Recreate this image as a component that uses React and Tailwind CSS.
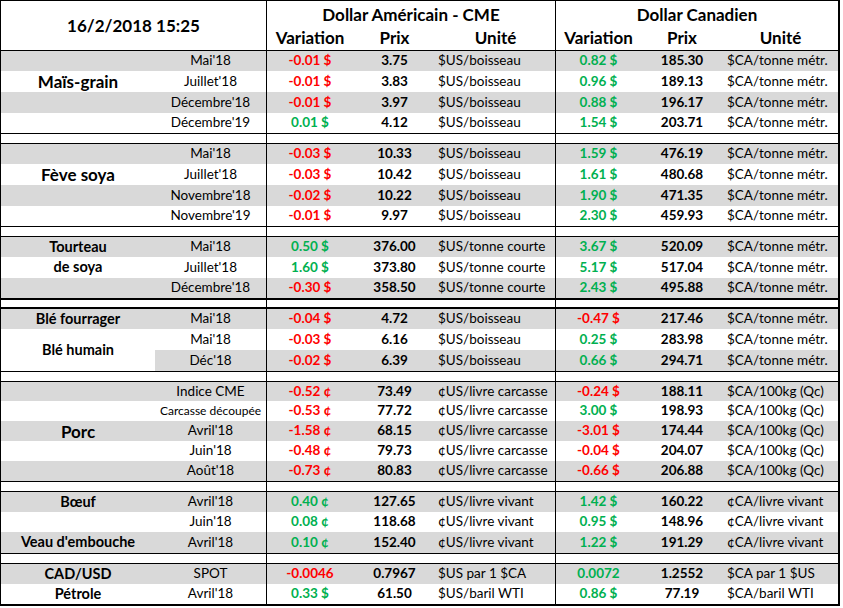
const cols = "grid grid-cols-[154px_111px_87px_83px_119px_86px_82px_115px]";

const US_BOIS = "$US/boisseau";
const CA_TM = "$CA/tonne métr.";

const sections = [
  {
    rows: [
      { c: "Mai'18", uv: "-0.01 $", up: "3.75", uu: US_BOIS, cv: "0.82 $", cp: "185.30", cu: CA_TM, h: 20 },
      { label: "Maïs-grain", big: true, c: "Juillet'18", uv: "-0.01 $", up: "3.83", uu: US_BOIS, cv: "0.96 $", cp: "189.13", cu: CA_TM, h: 21 },
      { c: "Décembre'18", uv: "-0.01 $", up: "3.97", uu: US_BOIS, cv: "0.88 $", cp: "196.17", cu: CA_TM, h: 21 },
      { c: "Décembre'19", uv: "0.01 $", up: "4.12", uu: US_BOIS, cv: "1.54 $", cp: "203.71", cu: CA_TM, h: 20 },
    ],
  },
  {
    rows: [
      { c: "Mai'18", uv: "-0.03 $", up: "10.33", uu: US_BOIS, cv: "1.59 $", cp: "476.19", cu: CA_TM, h: 20 },
      { label: "Fève soya", big: true, c: "Juillet'18", uv: "-0.03 $", up: "10.42", uu: US_BOIS, cv: "1.61 $", cp: "480.68", cu: CA_TM, h: 21 },
      { c: "Novembre'18", uv: "-0.02 $", up: "10.22", uu: US_BOIS, cv: "1.90 $", cp: "471.35", cu: CA_TM, h: 21 },
      { c: "Novembre'19", uv: "-0.01 $", up: "9.97", uu: US_BOIS, cv: "2.30 $", cp: "459.93", cu: CA_TM, h: 20 },
    ],
  },
  {
    thick: true,
    rows: [
      { label: "Tourteau", c: "Mai'18", uv: "0.50 $", up: "376.00", uu: "$US/tonne courte", cv: "3.67 $", cp: "520.09", cu: CA_TM, h: 20 },
      { label: "de soya", c: "Juillet'18", uv: "1.60 $", up: "373.80", uu: "$US/tonne courte", cv: "5.17 $", cp: "517.04", cu: CA_TM, h: 21 },
      { c: "Décembre'18", uv: "-0.30 $", up: "358.50", uu: "$US/tonne courte", cv: "2.43 $", cp: "495.88", cu: CA_TM, h: 20 },
    ],
  },
  {
    rows: [
      { label: "Blé fourrager", c: "Mai'18", uv: "-0.04 $", up: "4.72", uu: US_BOIS, cv: "-0.47 $", cp: "217.46", cu: CA_TM, h: 20 },
      { label: "Blé humain", span: true, c: "Mai'18", uv: "-0.03 $", up: "6.16", uu: US_BOIS, cv: "0.25 $", cp: "283.98", cu: CA_TM, h: 21 },
      { covered: true, c: "Déc'18", uv: "-0.02 $", up: "6.39", uu: US_BOIS, cv: "0.66 $", cp: "294.71", cu: CA_TM, h: 21 },
    ],
  },
  {
    rows: [
      { c: "Indice CME", uv: "-0.52 ¢", up: "73.49", uu: "¢US/livre carcasse", cv: "-0.24 $", cp: "188.11", cu: "$CA/100kg (Qc)", h: 19 },
      { c: "Carcasse découpée", small: true, uv: "-0.53 ¢", up: "77.72", uu: "¢US/livre carcasse", cv: "3.00 $", cp: "198.93", cu: "$CA/100kg (Qc)", h: 20 },
      { label: "Porc", big: true, c: "Avril'18", uv: "-1.58 ¢", up: "68.15", uu: "¢US/livre carcasse", cv: "-3.01 $", cp: "174.44", cu: "$CA/100kg (Qc)", h: 20 },
      { c: "Juin'18", uv: "-0.48 ¢", up: "79.73", uu: "¢US/livre carcasse", cv: "-0.04 $", cp: "204.07", cu: "$CA/100kg (Qc)", h: 20 },
      { c: "Août'18", uv: "-0.73 ¢", up: "80.83", uu: "¢US/livre carcasse", cv: "-0.66 $", cp: "206.88", cu: "$CA/100kg (Qc)", h: 20 },
    ],
  },
  {
    rows: [
      { label: "Bœuf", c: "Avril'18", uv: "0.40 ¢", up: "127.65", uu: "¢US/livre vivant", cv: "1.42 $", cp: "160.22", cu: "¢CA/livre vivant", h: 20 },
      { c: "Juin'18", uv: "0.08 ¢", up: "118.68", uu: "¢US/livre vivant", cv: "0.95 $", cp: "148.96", cu: "¢CA/livre vivant", h: 20 },
      { label: "Veau d'embouche", c: "Avril'18", uv: "0.10 ¢", up: "152.40", uu: "¢US/livre vivant", cv: "1.22 $", cp: "191.29", cu: "¢CA/livre vivant", h: 21 },
    ],
  },
  {
    last: true,
    rows: [
      { label: "CAD/USD", c: "SPOT", uv: "-0.0046", up: "0.7967", uu: "$US par 1 $CA", cv: "0.0072", cp: "1.2552", cu: "$CA par 1 $US", h: 20 },
      { label: "Pétrole", c: "Avril'18", uv: "0.33 $", up: "61.50", uu: "$US/baril WTI", cv: "0.86 $", cp: "77.19", cu: "$CA/baril WTI", h: 20 },
    ],
  },
];

const tone = (v) => (v.startsWith("-") ? "text-[#ff0000]" : "text-[#00b050]");

function Blank({ h = "h-[10px]", border = "border-b" }) {
  return (
    <div className={`flex ${h} ${border} border-black`}>
      <div className="w-[265px]" />
      <div className="w-[289px] border-l border-black" />
      <div className="flex-1 border-l border-black" />
    </div>
  );
}

function Section({ section }) {
  const cells = [];
  section.rows.forEach((r, i) => {
    const bg = i % 2 === 0 ? "bg-[#d9d9d9]" : "bg-white";
    const h = r.h === 19 ? "h-[19px]" : r.h === 21 ? "h-[21px]" : "h-[20px]";
    if (r.span) {
      cells.push(
        <div key={`l${i}`} className="row-span-2 bg-white flex items-center justify-center font-bold text-[14.5px] pt-[1px]">
          {r.label}
        </div>
      );
    } else if (!r.covered) {
      cells.push(
        <div
          key={`l${i}`}
          className={`${bg} ${h} flex items-center justify-center font-bold whitespace-nowrap ${r.big ? "text-[17px]" : "text-[14.5px]"}`}
        >
          {r.label || ""}
        </div>
      );
    }
    cells.push(
      <div key={`c${i}`} className={`${bg} ${h} flex items-center justify-center whitespace-nowrap ${r.small ? "text-[12px]" : "text-[13.5px]"}`}>
        {r.c}
      </div>,
      <div key={`uv${i}`} className={`${bg} ${h} border-l border-black flex items-center justify-center font-bold ${tone(r.uv)}`}>
        {r.uv}
      </div>,
      <div key={`up${i}`} className={`${bg} ${h} flex items-center justify-center font-bold`}>
        {r.up}
      </div>,
      <div key={`uu${i}`} className={`${bg} ${h} flex items-center pl-[2px] whitespace-nowrap`}>
        {r.uu}
      </div>,
      <div key={`cv${i}`} className={`${bg} ${h} border-l border-black flex items-center justify-center font-bold ${tone(r.cv)}`}>
        {r.cv}
      </div>,
      <div key={`cp${i}`} className={`${bg} ${h} flex items-center justify-center font-bold`}>
        {r.cp}
      </div>,
      <div key={`cu${i}`} className={`${bg} ${h} flex items-center pl-[4px] whitespace-nowrap`}>
        {r.cu}
      </div>
    );
  });
  return (
    <div className={`${cols} text-[13.5px] ${section.thick ? "border-b-2" : section.last ? "" : "border-b"} border-black`}>
      {cells}
    </div>
  );
}

export default function App() {
  return (
    <div className="w-[843px] h-[608px] bg-white font-['Lato',sans-serif] text-black leading-none">
      <div className="w-[840px] border-l border-t border-r-2 border-b-2 border-black">
        <div className={`${cols} grid-rows-[24px_25px] border-b border-black`}>
          <div className="col-span-2 row-span-2 flex items-center justify-center font-bold text-[17px]">
            16/2/2018 15:25
          </div>
          <div className="col-span-3 border-l border-black flex items-center justify-center font-bold text-[17px] pt-[2px]">
            Dollar Américain - CME
          </div>
          <div className="col-span-3 border-l border-black flex items-center justify-center font-bold text-[17px] pt-[2px]">
            Dollar Canadien
          </div>
          <div className="border-l border-black flex items-center justify-center font-bold text-[17px]">Variation</div>
          <div className="flex items-center justify-center font-bold text-[17px]">Prix</div>
          <div className="flex items-center justify-center font-bold text-[17px]">Unité</div>
          <div className="border-l border-black flex items-center justify-center font-bold text-[17px]">Variation</div>
          <div className="flex items-center justify-center font-bold text-[17px]">Prix</div>
          <div className="flex items-center justify-center font-bold text-[17px]">Unité</div>
        </div>
        {sections.map((s, i) => (
          <div key={i}>
            <Section section={s} />
            {s.thick ? (
              <Blank h="h-[9px]" border="border-b-2" />
            ) : !s.last ? (
              <Blank />
            ) : null}
          </div>
        ))}
      </div>
    </div>
  );
}
